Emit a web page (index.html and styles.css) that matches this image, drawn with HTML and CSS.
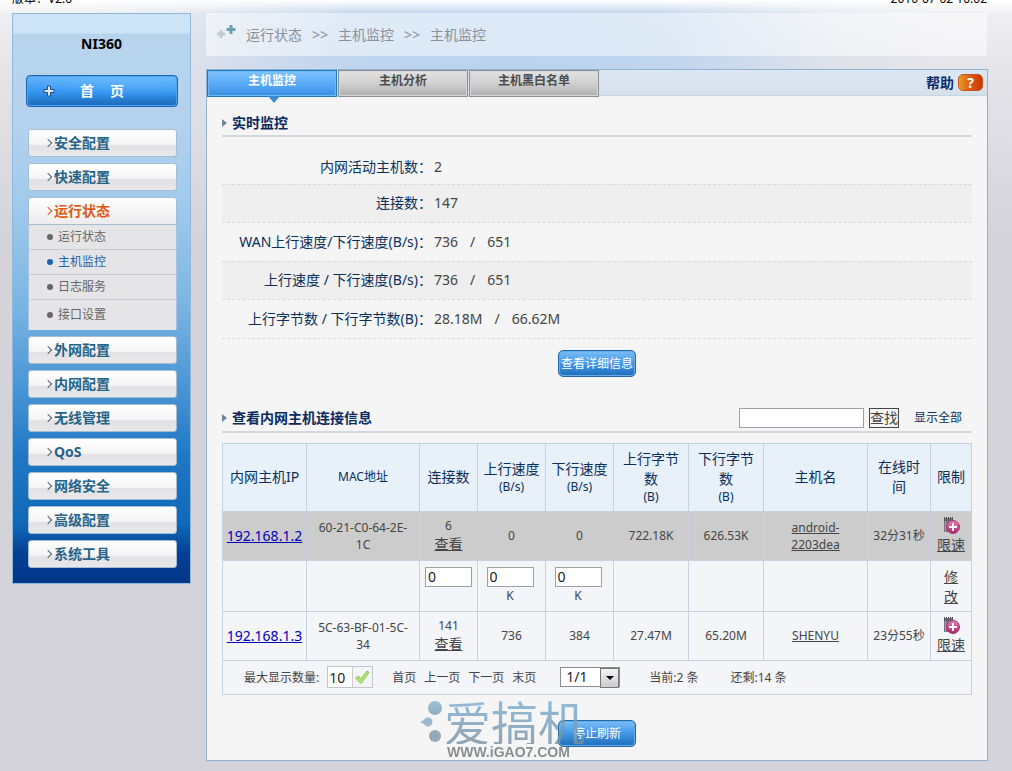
FILE: index.html
```html
<!DOCTYPE html>
<html lang="zh-CN">
<head>
<meta charset="utf-8">
<title>NI360</title>
<link rel="stylesheet" href="styles.css">
</head>
<body>
<svg class="defs" width="0" height="0" aria-hidden="true">
  <defs>
    <linearGradient id="pink" x1="0" y1="0" x2="0" y2="1"><stop offset="0" stop-color="#e880b8"/><stop offset="1" stop-color="#b0206c"/></linearGradient>
    <linearGradient id="dot" x1="0" y1="0" x2="0" y2="1"><stop offset="0" stop-color="#86b4d4"/><stop offset="1" stop-color="#7c98ac"/></linearGradient>
    <symbol id="limit" viewBox="0 0 18 18">
      <path d="M2 1h9v14H2z" fill="#77737c"/>
      <path d="M2.500 0v4M4.500 0v4M6.500 0v4M8.500 0v4M10.500 0v4" stroke="#55525c" stroke-width="1"/>
      <path d="M3.500 4v11" stroke="#a5a1aa"/>
      <circle cx="11" cy="10" r="6.500" fill="url(#pink)" stroke="#a83274"/>
      <path d="M11 6v8M7 10h8" stroke="#fff" stroke-width="2"/>
    </symbol>
  </defs>
</svg>
<header class="top"><span>版本：V2.0</span><span>2010-07-02 10:02</span></header>
<div class="layout">
  <nav class="side">
    <h1>NI360</h1>
    <a class="home" href="#"><svg width="12" height="12" viewBox="0 0 12 12"><path d="M4.500 1h3v3.500H11v3H7.500V11h-3V7.500H1v-3h3.500z" fill="#dbe9f6" stroke="#244e80"/></svg><span>首</span><span>页</span></a>
    <ul class="menu">
      <li><a class="item" href="#">安全配置</a></li>
      <li><a class="item" href="#">快速配置</a></li>
      <li class="open"><a class="item" href="#">运行状态</a>
        <ul class="sub">
          <li><a href="#">运行状态</a></li>
          <li><a class="on" href="#">主机监控</a></li>
          <li><a href="#">日志服务</a></li>
          <li><a href="#">接口设置</a></li>
        </ul>
      </li>
      <li><a class="item" href="#">外网配置</a></li>
      <li><a class="item" href="#">内网配置</a></li>
      <li><a class="item" href="#">无线管理</a></li>
      <li><a class="item" href="#">QoS</a></li>
      <li><a class="item" href="#">网络安全</a></li>
      <li><a class="item" href="#">高级配置</a></li>
      <li><a class="item" href="#">系统工具</a></li>
    </ul>
  </nav>
  <main class="main">
    <div class="crumbs">
      <svg width="20" height="14" viewBox="0 0 20 14"><path d="M5 5v8M1 9h8" stroke="#c3c8cf" stroke-width="3"/><path d="M15 0v9M10.500 4.500h9" stroke="#6f9fb2" stroke-width="3"/></svg>
      <span>运行状态</span><span>&gt;&gt;</span><span>主机监控</span><span>&gt;&gt;</span><span>主机监控</span>
    </div>
    <section class="panel">
      <div class="tabs">
        <button class="tab active" type="button">主机监控</button>
        <button class="tab" type="button">主机分析</button>
        <button class="tab" type="button">主机黑白名单</button>
        <a class="help" href="#">帮助<span class="q">?</span></a>
      </div>
      <div class="body">
        <div class="title"><h2>实时监控</h2></div>
        <table class="stats">
          <tr><th scope="row">内网活动主机数：</th><td>2</td></tr>
          <tr><th scope="row">连接数：</th><td>147</td></tr>
          <tr><th scope="row">WAN上行速度/下行速度(B/s)：</th><td><span>736</span><span>/</span><span>651</span></td></tr>
          <tr><th scope="row">上行速度 / 下行速度(B/s)：</th><td><span>736</span><span>/</span><span>651</span></td></tr>
          <tr><th scope="row">上行字节数 / 下行字节数(B)：</th><td><span>28.18M</span><span>/</span><span>66.62M</span></td></tr>
        </table>
        <div class="center"><button class="btn" type="button">查看详细信息</button></div>
        <div class="title second"><h2>查看内网主机连接信息</h2>
          <form class="find"><input class="field" type="text" aria-label="查找主机"><button class="search" type="button">查找</button><a href="#">显示全部</a></form>
        </div>
        <table class="hosts">
          <colgroup><col class="c-ip"><col class="c-mac"><col class="c-conn"><col class="c-speed"><col class="c-speed"><col class="c-bytes"><col class="c-bytes"><col class="c-name"><col class="c-time"><col class="c-limit"></colgroup>
          <thead><tr><th>内网主机IP</th><th class="small">MAC地址</th><th>连接数</th><th>上行速度<small>(B/s)</small></th><th>下行速度<small>(B/s)</small></th><th>上行字节<br>数<small>(B)</small></th><th>下行字节<br>数<small>(B)</small></th><th>主机名</th><th>在线时<br>间</th><th>限制</th></tr></thead>
          <tbody>
            <tr class="row picked"><td><a class="ip" href="#">192.168.1.2</a></td><td>60-21-C0-64-2E-<br>1C</td><td>6<br><a class="link" href="#">查看</a></td><td>0</td><td>0</td><td>722.18K</td><td>626.53K</td><td><a href="#">android-<br>2203dea</a></td><td>32分31秒</td><td><svg width="18" height="18"><use href="#limit"/></svg><a class="link" href="#">限速</a></td></tr>
            <tr class="edit"><td></td><td></td><td><input class="field num" type="text" value="0" aria-label="连接数限制"></td><td class="rate"><input class="field num" type="text" value="0" aria-label="上行速度限制"><br>K</td><td class="rate"><input class="field num" type="text" value="0" aria-label="下行速度限制"><br>K</td><td></td><td></td><td></td><td></td><td><a class="link" href="#">修<br>改</a></td></tr>
            <tr class="row"><td><a class="ip" href="#">192.168.1.3</a></td><td>5C-63-BF-01-5C-<br>34</td><td>141<br><a class="link" href="#">查看</a></td><td>736</td><td>384</td><td>27.47M</td><td>65.20M</td><td><a href="#">SHENYU</a></td><td>23分55秒</td><td><svg width="18" height="18"><use href="#limit"/></svg><a class="link" href="#">限速</a></td></tr>
          </tbody>
          <tfoot><tr><td colspan="10"><div class="pager">
            <label for="max">最大显示数量:</label>
            <span class="max"><input id="max" type="text" value="10"><button type="button" aria-label="确定"><svg width="16" height="16" viewBox="0 0 16 16"><path d="M1.500 9l3-2 2 3L13 2l2 1.500L7 14.500z" fill="#b4e274" stroke="#8cc850"/></svg></button></span>
            <span class="pages"><a href="#">首页</a><a href="#">上一页</a><a href="#">下一页</a><a href="#">末页</a></span>
            <span class="select"><select aria-label="页码"><option>1/1</option></select></span>
            <span class="count">当前:2 条</span><span class="count">还剩:14 条</span>
          </div></td></tr></tfoot>
        </table>
        <div class="center last"><button class="btn" type="button">停止刷新</button>
          <div class="mark"><svg width="24" height="46" viewBox="0 0 24 46"><circle cx="15" cy="10" r="7" fill="url(#dot)"/><path d="M0 24l4-2a4.500 4.500 0 1 1 0 4z" fill="#86abc4"/><circle cx="15" cy="38" r="6" fill="#7c98ac"/></svg><span class="brand">爱搞机</span><span class="url">WWW.iGAO7.COM</span></div>
        </div>
      </div>
    </section>
  </main>
</div>
</body>
</html>
```

FILE: styles.css
```css
* { box-sizing: border-box; }
body {
  margin: 0;
  font: 12px/18px "Noto Sans", "Noto Sans CJK SC", sans-serif;
  color: #444;
  background:
    linear-gradient(#fff, rgba(255,255,255,0) 14px) no-repeat,
    radial-gradient(ellipse 440px 150px at 50% 40px, #b8d2ef 0, rgba(186,210,238,.85) 40%, rgba(205,216,234,.3) 75%, rgba(215,220,234,0) 100%) no-repeat,
    linear-gradient(#f2f2f4, #e5e4e9 70px, #d3d3d9 240px) no-repeat #d3d3d9;
}
a { color: inherit; }
ul { list-style: none; margin: 0; padding: 0; }
h1, h2 { margin: 0; font-size: 14px; }
button, input, select { font: inherit; margin: 0; padding: 0; border-radius: 0; }
.defs { position: absolute; }
.top { display: flex; justify-content: space-between; align-items: flex-end; height: 13px; padding: 0 25px 5px 12px; overflow: hidden; color: #000; }
.layout { display: flex; align-items: flex-start; gap: 15px; padding: 0 24px 10px 12px; }

.side {
  flex: 0 0 179px;
  padding: 20px 12px 15px;
  border: 1px solid #8fb8da;
  background: linear-gradient(#cce4f5 19px, #b8d4ed 20px, #b5d2ee 110px, #a0caec 190px, #7cb5e3 290px, #4b97d6 370px, #2078c5 440px, #0f69b8 510px, #053f93 540px, #023688);
}
.side h1 { text-align: center; line-height: 20px; color: #000; }
.home {
  display: flex; align-items: center; height: 32px; margin: 21px 0 0 1px; padding: 0 16px;
  border: 1px solid #1c66b4; border-radius: 4px;
  background: radial-gradient(ellipse 130px 20px at 75% 0, rgba(110,190,255,.7), rgba(60,150,240,0)), linear-gradient(#62b2fa, #3494f0 55%, #1b68b8);
  box-shadow: inset 0 0 0 1px #4fa2ee;
  color: #fff; font-size: 14px; font-weight: bold; text-decoration: none; gap: 16px;
}
.home svg { margin-right: 9px; }
.menu { display: grid; gap: 6px; margin: 22px 0 0; padding: 0 1px 0 3px; }
.item {
  display: flex; align-items: center; height: 28px; padding-left: 16px; gap: 3px;
  border: 1px solid #a4bdd3; border-radius: 3px;
  background: linear-gradient(#fff, #f5f5f6 55%, #e2e2e5 60%, #e8e8ea);
  color: #256489; font-size: 14px; font-weight: bold; text-decoration: none;
}
.item::before { content: ""; width: 5px; height: 5px; border: solid #536374; border-width: 1px 1px 0 0; transform: rotate(45deg); }
.open .item { color: #e05a14; border-radius: 3px 3px 0 0; background: linear-gradient(#fff, #ececee); }
.open .item::before { border-color: #e05a14; }
.sub { padding: 0; border: solid #a9c3dc; border-width: 0 1px; background: #e5e5e8; }
.sub a { display: flex; align-items: center; gap: 5px; height: 25px; padding-left: 18px; border-bottom: 1px solid #c6cbd0; color: #666; text-decoration: none; }
.sub li:last-child a { border: 0; height: 30px; }
.sub a::before { content: ""; width: 6px; height: 6px; border-radius: 50%; background: currentColor; }
.sub .on { color: #1a64ae; }

.main { flex: 1; min-width: 0; }
.crumbs { display: flex; align-items: center; gap: 10px; height: 43px; padding-left: 10px; margin-right: 1px; background: rgba(255,255,255,.5); border-radius: 2px; color: #8a9099; font-size: 14px; }
.crumbs svg { margin-bottom: 6px; }
.panel { margin-top: 13px; border: 1px solid #8db4d4; background: #f5f5f5; }
.tabs { display: flex; gap: 1px; height: 26px; background: linear-gradient(#dce7f4, #d5e0ea); border-bottom: 1px solid #c5d6e5; }
.tab {
  position: relative; flex: 0 0 130px; height: 27px; padding-bottom: 5px; border: 1px solid #8f8f8f;
  background: linear-gradient(#e2e2e2, #d0d0d0 50%, #adadad); box-shadow: inset 0 0 0 1px #d8d8d8;
  color: #4c4c4c; font-weight: bold;
}
.tab.active { border-color: #2079bd; background: linear-gradient(#80c2fd, #5aaafa 50%, #3a8ee0); box-shadow: inset 0 0 0 1px #72b8f6; color: #fff; }
.tab.active::after { content: ""; position: absolute; top: 25px; left: 60px; border: solid transparent; border-width: 7px 6px 0; border-top-color: #3b8ccc; }
.help { display: flex; align-items: center; gap: 4px; margin-left: auto; padding-right: 4px; color: #0b2f6b; font-size: 14px; font-weight: bold; text-decoration: none; }
.q { width: 25px; height: 17px; border-radius: 5px; border: 1px solid #c8531c; background: linear-gradient(90deg, #e99a20, #e05812 50%, #c63806); color: #fff; line-height: 16px; text-align: center; }
.body { padding: 15px 15px 13px; }
.title { display: flex; align-items: center; height: 26px; border-bottom: 2px solid #d3d8dc; }
.title h2 { display: flex; align-items: center; gap: 5px; color: #0b2a5e; line-height: 24px; }
.title h2::before { content: ""; border: solid transparent; border-width: 4px 0 4px 5px; border-left-color: #73839a; }

.stats { width: 100%; margin-top: 13px; border-collapse: collapse; font-size: 14px; line-height: 20px; }
.stats th, .stats td { height: 39px; padding: 0; border-bottom: 1px dashed #d5dad9; }
.stats tr:first-child > * { height: 34px; }
.stats tr:nth-child(even) > * { height: 38px; background: #efefef; }
.stats th { width: 28%; color: #0b2f5b; font-weight: normal; text-align: right; white-space: nowrap; }
.stats td { padding-left: 2px; }
.stats span { margin-right: 12px; }
.center { display: flex; justify-content: center; margin-top: 11px; }
.btn { width: 78px; height: 27px; padding-top: 2px; border: 1px solid #2467a8; border-radius: 5px; background: linear-gradient(#7abef8, #4298e6 50%, #1d6cba); box-shadow: inset 0 0 0 1px #67aee8; color: #fff; white-space: nowrap; }
.second { height: 28px; margin-top: 28px; }
.find { display: flex; align-items: center; margin: 0 10px 0 auto; gap: 5px; }
.find a { margin-left: 10px; color: #0b2f5b; text-decoration: none; }
.field { width: 125px; height: 20px; border: 1px solid #a0a0a4; background: #fff; color: #222; }
.search { width: 30px; height: 20px; border: 1px solid #444; background: #f5f5f5; color: #444; font-size: 14px; line-height: 18px; }

.hosts { width: 100%; margin-top: 10px; table-layout: fixed; border-collapse: collapse; background: #f3f5f9; text-align: center; line-height: 17px; }
.hosts th, .hosts td { padding: 0; border: 1px solid #c6d1e2; white-space: nowrap; }
.hosts th { height: 68px; background: #e8f0fa; color: #0b2f5b; font-size: 14px; font-weight: normal; line-height: 20px; }
.hosts small, .hosts .small { font-size: 12px; }
.hosts small { display: block; line-height: 16px; }
.c-ip { width: 84px; } .c-mac { width: 113px; } .c-conn { width: 58px; } .c-speed { width: 68px; } .c-bytes { width: 75px; } .c-name { width: 104px; } .c-time { width: 63px; } .c-limit { width: 41px; }
.row td { height: 49px; }
.picked { background: #ccc; }
.ip { color: #0000b8; font-size: 14px; }
.link { font-size: 14px; line-height: 20px; }
.row svg { display: block; margin: 0 auto; }
.edit td { height: 51px; vertical-align: top; padding-top: 6px; }
.edit .rate { padding-right: 3px; }
.edit .link { display: block; }
.num { width: 47px; padding-left: 2px; font-size: 14px; }
.hosts tfoot td { height: 34px; }
.pager { display: flex; align-items: center; padding-left: 21px; }
.max { display: flex; height: 22px; margin: 0 19px 0 8px; border: 1px solid #c1c4c8; }
.max input { width: 25px; border: 0; border-right: 1px solid #ccc; background: #fff; color: #222; font-size: 14px; padding-left: 1px; }
.max button { display: flex; align-items: center; width: 19px; border: 0; padding-left: 1px; background: #f3f5f6; }
.pages { display: flex; gap: 8px; margin-right: 24px; }
.pages a { text-decoration: none; }
.select { position: relative; }
.select select { display: block; width: 60px; height: 20px; padding-left: 5px; appearance: none; border: 1px solid #8c8c8c; background: #fff; color: #222; font-size: 14px; line-height: 18px; }
.select::before { content: ""; position: absolute; top: 1px; right: 1px; width: 17px; height: 18px; border: 1px solid #777; background: linear-gradient(#f4f4f4, #ccc); pointer-events: none; }
.select::after { content: ""; position: absolute; top: 9px; right: 6px; border: solid transparent; border-width: 4px 4px 0; border-top-color: #000; pointer-events: none; }
.count { margin-left: 29px; }
.count + .count { margin-left: 32px; }

.last { position: relative; margin-top: 25px; }
.mark { position: absolute; top: -22px; left: 198px; display: grid; grid-template-columns: 24px auto; pointer-events: none; opacity: .8; }
.brand { font: 400 47px/46px "Noto Sans CJK SC", sans-serif; color: transparent; background: linear-gradient(#79b0d6, #7890a2); background-clip: text; -webkit-background-clip: text; }
.url { grid-column: 1 / 3; padding-left: 27px; font: bold 14px/16px "Liberation Sans", sans-serif; color: #6e7479; }
```
